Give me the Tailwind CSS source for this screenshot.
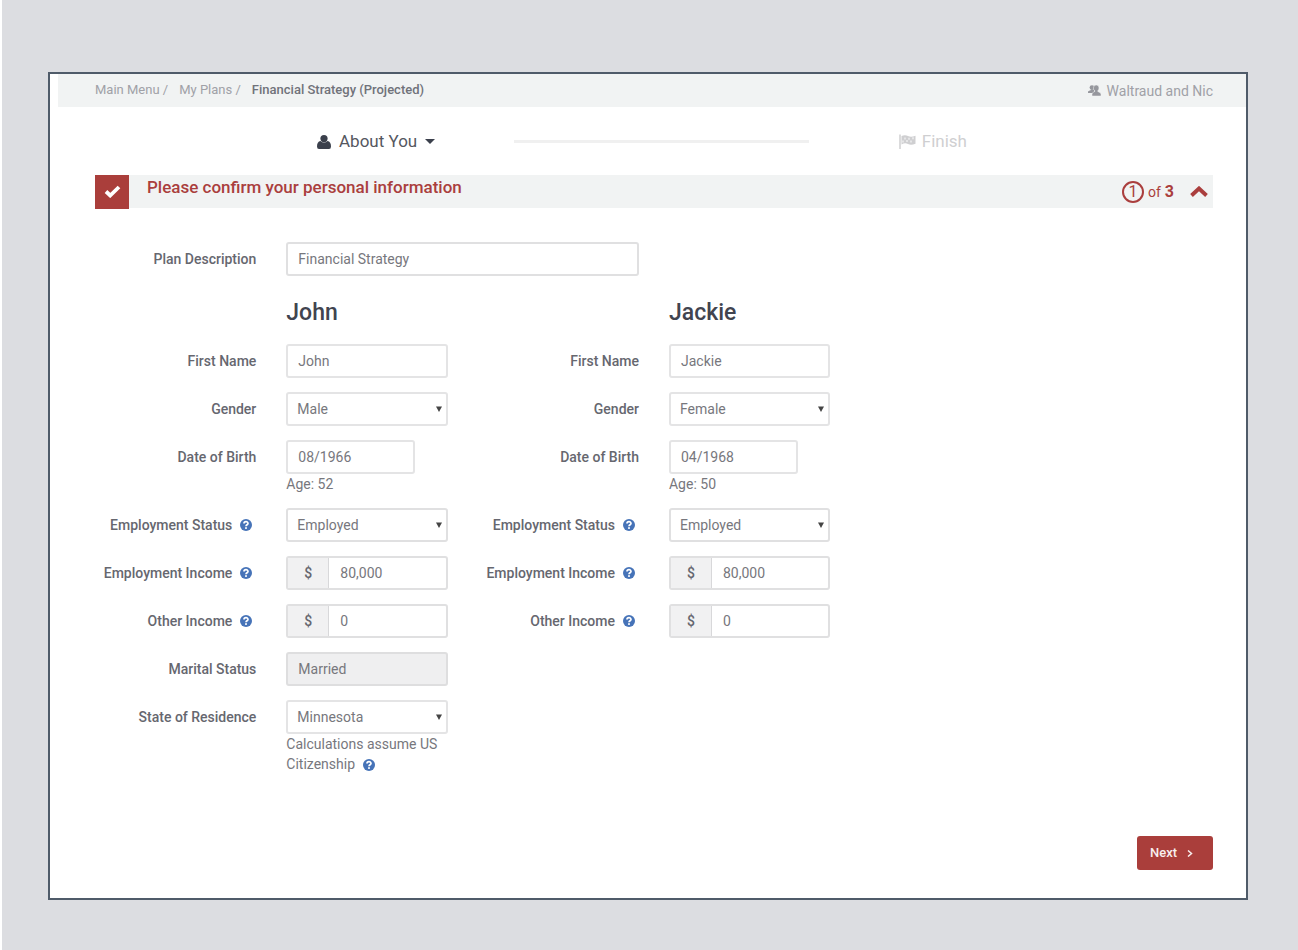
<!DOCTYPE html>
<html lang="en">
<head>
<meta charset="utf-8">
<meta name="viewport" content="width=device-width, initial-scale=1">
<title>Financial Strategy</title>
<script src="https://cdn.jsdelivr.net/npm/@tailwindcss/browser@4"></script>
</head>
<body class="min-h-screen border-l-2 border-white bg-[#dcdde1] pt-[72px] pr-[50px] pb-[50px] pl-[46px] font-['Roboto','Liberation_Sans',sans-serif] text-sm text-[#77777d]">
<svg class="hidden" aria-hidden="true">
  <symbol id="help" viewBox="0 0 12 12"><circle cx="6" cy="6" r="6" fill="#4673b8"/><path d="M4 4.500C4 2 8 2 8 4.400C8 5.800 6 5.800 6 7.300" fill="none" stroke="#fff" stroke-width="1.700"/><rect x="5.100" y="8.200" width="1.800" height="1.700" fill="#fff"/></symbol>
  <symbol id="caret" viewBox="0 0 6 6"><path d="M0 .5h6L3 6z" fill="#444"/></symbol>
</svg>
<main class="flex min-h-[828px] flex-col border-2 border-[#4f5b69] bg-white pl-2">
  <header class="flex h-[33px] items-center justify-between bg-[#f1f3f3] pr-[33px] pl-[37px] text-[#a0a1a7]">
    <nav class="flex gap-[11px] text-[13px]" aria-label="Breadcrumb">
      <span><a href="#">Main Menu</a> /</span>
      <span><a href="#">My Plans</a> /</span>
      <span class="font-medium text-[#70727a]">Financial Strategy (Projected)</span>
    </nav>
    <a href="#" class="flex items-center gap-[6px]">
      <svg class="h-[11px] w-[13px]" viewBox="0 0 13 11" fill="#96979d"><circle cx="4" cy="2.600" r="2.400"/><path d="M3 4.500h3V8H0V6.500Q1 5.500 3 5z"/><path d="M8.200 0Q11 0 11 3 11 4.800 9.800 5.700V6.500Q13 7.500 13 9v2H4V9Q4 7.500 6.700 6.500V5.700Q5.400 4.800 5.400 3 5.400 0 8.200 0z" stroke="#f1f3f3" stroke-width=".5"/></svg>
      <span>Waltraud and Nic</span>
    </a>
  </header>

  <div class="flex flex-1 flex-col pr-[33px] pl-[37px]">
    <div class="flex h-[67px] items-center pt-[2px] pr-[246px] pl-[222px] text-[17px]">
      <button type="button" class="flex items-center gap-2 text-[#55575f]">
        <svg class="h-[14px] w-[14px]" viewBox="0 0 14 14" fill="#3b404c"><circle cx="7" cy="3.600" r="3.600"/><path d="M3.500 6Q7 9 10.500 6 14 6.500 14 11.500 14 14 12 14H2Q0 14 0 11.500 0 6.500 3.500 6z"/></svg>
        <span>About You</span>
        <svg class="h-[5px] w-[10px]" viewBox="0 0 10 5"><path d="M0 0h10L5 5z" fill="#3b404c"/></svg>
      </button>
      <div class="mr-[90px] ml-[79px] h-[3px] flex-1 bg-[#f0f0f0]"></div>
      <div class="flex items-center gap-[6px] text-[#cfcfd1]">
        <svg class="h-[15px] w-[17px]" viewBox="0 0 17 15"><path d="M1 .5V15" stroke="#cfcfd1" stroke-width="1.500"/><path d="M2.500 2Q6 .5 9 2t7.500-.3v8Q12 11.500 9 10t-6.500.5z" fill="#cfcfd1"/><path d="M5 3.500h2v2H5zm4 .3h2v2H9zm4-.5h2v2h-2zM3 6.500h2v2H3zm4-.5h2v2H7zm4 .5h2v2h-2z" fill="#e6e6e7"/></svg>
        <span>Finish</span>
      </div>
    </div>

    <section class="mt-px flex h-[33px] items-center bg-[#f1f3f3] text-[#aa3e3d]">
      <div class="flex h-[34px] w-[34px] items-center justify-center bg-[#aa3e3b]">
        <svg class="h-[13px] w-[17px]" viewBox="0 0 17 13"><path d="m2 6.500 4.200 4L15 2" fill="none" stroke="#fff" stroke-width="3.800"/></svg>
      </div>
      <h1 class="mb-2 ml-[18px] flex-1 text-[17px] font-medium">Please confirm your personal information</h1>
      <div class="flex items-center gap-1">
        <span class="flex h-[22px] w-[22px] items-center justify-center rounded-full border-2 border-[#aa3e3d] text-base">1</span>
        <span>of</span>
        <span class="text-base font-bold">3</span>
      </div>
      <button type="button" aria-label="Collapse section" class="mr-[5px] ml-4">
        <svg class="h-[11px] w-[18px]" viewBox="0 0 18 11"><path d="m1.500 9.500 7.500-7 7.500 7" fill="none" stroke="#aa3e3d" stroke-width="3.900"/></svg>
      </button>
    </section>

    <form class="flex flex-1 flex-col pt-[34px]">
      <div class="grid grid-cols-6 gap-x-[30px]">
        <label for="plan" class="text-right leading-[34px] font-medium text-[#66676f]">Plan Description</label>
        <input id="plan" value="Financial Strategy" class="col-span-2 h-[34px] w-full rounded-[3px] border-2 border-[#e0e0e1] px-[10px]">
      </div>

      <div class="grid grid-cols-3 gap-x-[30px]">
        <div class="grid auto-rows-min grid-cols-2 gap-x-[30px] gap-y-[14px] font-medium leading-[34px] text-[#66676f]">
          <h2 class="col-start-2 mt-5 text-[23px] leading-[34px] text-[#41444f]">John</h2>

          <label for="fn1" class="col-start-1 text-right">First Name</label>
          <input id="fn1" value="John" class="h-[34px] w-full rounded-[3px] border-2 border-[#e4e4e5] px-[10px] font-normal text-[#77777d]">

          <label for="g1" class="text-right">Gender</label>
          <div class="relative h-[34px]"><select id="g1" class="block h-[34px] w-full appearance-none rounded-[3px] border-2 border-[#e4e4e5] bg-white px-[9px] leading-5 font-normal text-[#77777d]"><option>Male</option></select><svg class="pointer-events-none absolute top-[14px] right-[6px] h-[6px] w-[6px]"><use href="#caret"/></svg></div>

          <label for="d1" class="text-right">Date of Birth</label>
          <div class="font-normal text-[#77777d]"><input id="d1" value="08/1966" class="block h-[34px] w-4/5 rounded-[3px] border-2 border-[#e4e4e5] px-[10px]"><p class="leading-5">Age: 52</p></div>

          <div class="flex h-[34px] items-center justify-end gap-2 pr-1"><label for="e1">Employment Status</label><button type="button" aria-label="Help on employment status"><svg class="h-3 w-3"><use href="#help"/></svg></button></div>
          <div class="relative h-[34px]"><select id="e1" class="block h-[34px] w-full appearance-none rounded-[3px] border-2 border-[#e0e0e1] bg-white px-[9px] leading-5 font-normal text-[#77777d]"><option>Employed</option></select><svg class="pointer-events-none absolute top-[14px] right-[6px] h-[6px] w-[6px]"><use href="#caret"/></svg></div>

          <div class="flex h-[34px] items-center justify-end gap-2 pr-1"><label for="i1">Employment Income</label><button type="button" aria-label="Help on employment income"><svg class="h-3 w-3"><use href="#help"/></svg></button></div>
          <div class="flex h-[34px] overflow-hidden rounded-[3px] border-2 border-[#e0e0e1]"><span class="flex w-[41px] shrink-0 items-center justify-center border-r border-[#d8d8da] bg-[#f1f1f2]">$</span><input id="i1" value="80,000" class="w-full min-w-0 px-[11px] font-normal text-[#77777d]"></div>

          <div class="flex h-[34px] items-center justify-end gap-2 pr-1"><label for="o1">Other Income</label><button type="button" aria-label="Help on other income"><svg class="h-3 w-3"><use href="#help"/></svg></button></div>
          <div class="flex h-[34px] overflow-hidden rounded-[3px] border-2 border-[#e0e0e1]"><span class="flex w-[41px] shrink-0 items-center justify-center border-r border-[#d8d8da] bg-[#f1f1f2]">$</span><input id="o1" value="0" class="w-full min-w-0 px-[11px] font-normal text-[#77777d]"></div>

          <label for="m1" class="text-right">Marital Status</label>
          <input id="m1" value="Married" readonly class="h-[34px] w-full rounded-[3px] border-2 border-[#dededf] bg-[#efeff0] px-[10px] font-normal text-[#77777d]">

          <label for="s1" class="text-right">State of Residence</label>
          <div class="font-normal text-[#77777d]">
            <div class="relative h-[34px]"><select id="s1" class="block h-[34px] w-full appearance-none rounded-[3px] border-2 border-[#e4e4e5] bg-white px-[9px] leading-5"><option>Minnesota</option></select><svg class="pointer-events-none absolute top-[14px] right-[6px] h-[6px] w-[6px]"><use href="#caret"/></svg></div>
            <p class="leading-5">Calculations assume US Citizenship <button type="button" aria-label="Help on citizenship" class="ml-1 align-middle"><svg class="h-3 w-3"><use href="#help"/></svg></button></p>
          </div>
        </div>

        <div class="grid auto-rows-min grid-cols-2 gap-x-[30px] gap-y-[14px] font-medium leading-[34px] text-[#66676f]">
          <h2 class="col-start-2 mt-5 text-[23px] leading-[34px] text-[#41444f]">Jackie</h2>

          <label for="fn2" class="col-start-1 text-right">First Name</label>
          <input id="fn2" value="Jackie" class="h-[34px] w-full rounded-[3px] border-2 border-[#e4e4e5] px-[10px] font-normal text-[#77777d]">

          <label for="g2" class="text-right">Gender</label>
          <div class="relative h-[34px]"><select id="g2" class="block h-[34px] w-full appearance-none rounded-[3px] border-2 border-[#e4e4e5] bg-white px-[9px] leading-5 font-normal text-[#77777d]"><option>Female</option></select><svg class="pointer-events-none absolute top-[14px] right-[6px] h-[6px] w-[6px]"><use href="#caret"/></svg></div>

          <label for="d2" class="text-right">Date of Birth</label>
          <div class="font-normal text-[#77777d]"><input id="d2" value="04/1968" class="block h-[34px] w-4/5 rounded-[3px] border-2 border-[#e4e4e5] px-[10px]"><p class="leading-5">Age: 50</p></div>

          <div class="flex h-[34px] items-center justify-end gap-2 pr-1"><label for="e2">Employment Status</label><button type="button" aria-label="Help on employment status"><svg class="h-3 w-3"><use href="#help"/></svg></button></div>
          <div class="relative h-[34px]"><select id="e2" class="block h-[34px] w-full appearance-none rounded-[3px] border-2 border-[#e0e0e1] bg-white px-[9px] leading-5 font-normal text-[#77777d]"><option>Employed</option></select><svg class="pointer-events-none absolute top-[14px] right-[6px] h-[6px] w-[6px]"><use href="#caret"/></svg></div>

          <div class="flex h-[34px] items-center justify-end gap-2 pr-1"><label for="i2">Employment Income</label><button type="button" aria-label="Help on employment income"><svg class="h-3 w-3"><use href="#help"/></svg></button></div>
          <div class="flex h-[34px] overflow-hidden rounded-[3px] border-2 border-[#e0e0e1]"><span class="flex w-[41px] shrink-0 items-center justify-center border-r border-[#d8d8da] bg-[#f1f1f2]">$</span><input id="i2" value="80,000" class="w-full min-w-0 px-[11px] font-normal text-[#77777d]"></div>

          <div class="flex h-[34px] items-center justify-end gap-2 pr-1"><label for="o2">Other Income</label><button type="button" aria-label="Help on other income"><svg class="h-3 w-3"><use href="#help"/></svg></button></div>
          <div class="flex h-[34px] overflow-hidden rounded-[3px] border-2 border-[#e0e0e1]"><span class="flex w-[41px] shrink-0 items-center justify-center border-r border-[#d8d8da] bg-[#f1f1f2]">$</span><input id="o2" value="0" class="w-full min-w-0 px-[11px] font-normal text-[#77777d]"></div>
        </div>
      </div>

      <div class="mt-auto flex justify-end pb-7">
        <button type="submit" class="flex h-[34px] w-[76px] items-center gap-[10px] rounded-[3px] bg-[#aa3e3b] pl-[13px] text-[13px] font-medium text-[#f8eeee]">Next
          <svg class="h-[7px] w-[6px]" viewBox="0 0 6 7"><path d="m1 .5 3.500 3L1 6.500" fill="none" stroke="#f8eeee" stroke-width="1.500"/></svg>
        </button>
      </div>
    </form>
  </div>
</main>
</body>
</html>
